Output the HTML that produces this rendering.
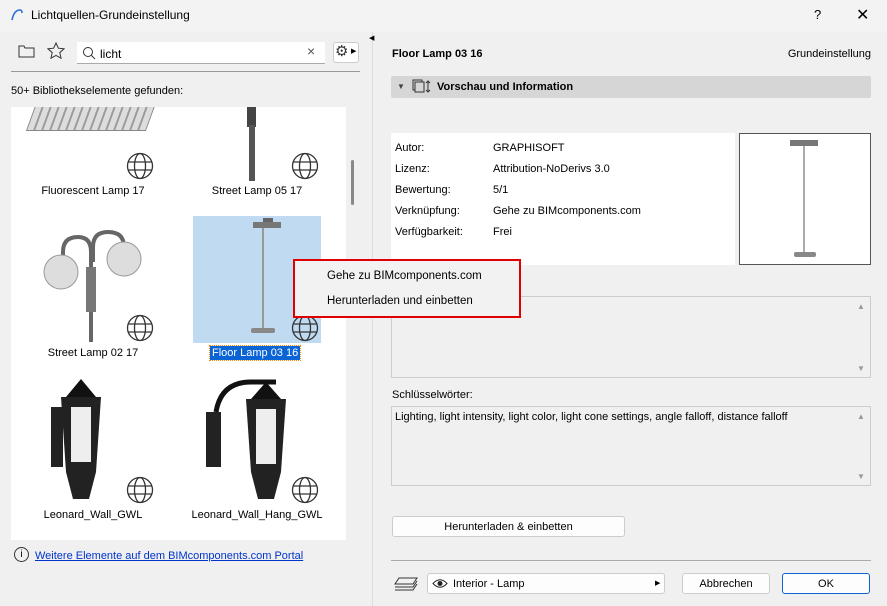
<!DOCTYPE html>
<html><head><meta charset="utf-8"><style>
*{box-sizing:border-box;margin:0;padding:0}
body{width:887px;height:606px;background:#f0f0f0;font-family:"Liberation Sans",sans-serif;font-size:11px;color:#000;position:relative;overflow:hidden}
.a{position:absolute}
.t{position:absolute;white-space:nowrap}
.globe{position:absolute;width:28px;height:28px}
.lbl{position:absolute;font-size:11px;text-align:center;width:160px}
</style></head><body>
<div class="a" style="left:0;top:0;width:887px;height:32px;background:#f3f3f3"></div>
<svg class="a" style="left:10px;top:8px" width="14" height="14"><path d="M2 12 Q4 2 10 2 Q12 2 12 5" stroke="#2b6cd8" stroke-width="1.6" fill="none"/></svg>
<div class="t" style="left:31px;top:8px;font-size:12px">Lichtquellen-Grundeinstellung</div>
<div class="t" style="left:814px;top:7px;font-size:13px">?</div>
<div class="t" style="left:856px;top:5px;font-size:16px">✕</div>
<svg class="a" style="left:18px;top:44px" width="17" height="14"><path d="M1 2h5l1 2h9v9H1z" stroke="#333" fill="none"/></svg>
<svg class="a" style="left:47px;top:42px" width="18" height="18"><path d="M9 1l2.4 5.2 5.6.6-4.2 3.8 1.2 5.6L9 13.4 4 16.2l1.2-5.6L1 6.8l5.6-.6z" stroke="#333" fill="none"/></svg>
<div class="a" style="left:77px;top:42px;width:248px;height:22px;background:#fff;border-bottom:1px solid #aaa"></div>
<svg class="a" style="left:82px;top:46px" width="14" height="14"><circle cx="6" cy="6" r="4.5" stroke="#333" fill="none"/><path d="M9 9l4 4" stroke="#333"/></svg>
<div class="t" style="left:100px;top:47px;font-size:12px">licht</div>
<div class="t" style="left:307px;top:43px;font-size:14px;color:#555">×</div>
<div class="a" style="left:333px;top:42px;width:26px;height:21px;background:#fff;border:1px solid #ccc;border-radius:3px"></div>
<div class="t" style="left:335px;top:42px;font-size:15px;color:#333">⚙</div>
<div class="t" style="left:351px;top:47px;font-size:7px">▶</div>
<div class="a" style="left:11px;top:71px;width:349px;height:1px;background:#999"></div>
<div class="t" style="left:11px;top:85px">50+ Bibliothekselemente gefunden:</div>
<div class="a" style="left:11px;top:107px;width:335px;height:433px;background:#fff;overflow:hidden">
 <div class="a" style="left:20px;top:-4px;width:120px;height:28px;background:repeating-linear-gradient(90deg,#ddd 0 6px,#999 6px 8px);transform:skewX(-20deg);border:1px solid #888"></div>
 <div class="a" style="left:236px;top:0;width:9px;height:20px;background:#444"></div>
 <div class="a" style="left:238px;top:18px;width:6px;height:56px;background:#555"></div>
 <div class="a" style="left:182px;top:109px;width:128px;height:127px;background:#bfdaf1"></div>
 <div class="a" style="left:252px;top:111px;width:10px;height:4px;background:#666"></div>
 <div class="a" style="left:242px;top:115px;width:28px;height:6px;background:#777"></div>
 <div class="a" style="left:251px;top:121px;width:2px;height:100px;background:#999"></div>
 <div class="a" style="left:240px;top:221px;width:24px;height:5px;background:#888;border-radius:2px"></div>
 <svg class="a" style="left:25px;top:120px" width="120" height="115"><path d="M27 45 V25 Q27 10 42 10 Q55 10 55 25 V115" stroke="#666" stroke-width="4" fill="none"/><path d="M57 35 V20 Q57 5 72 5 Q88 5 88 20" stroke="#666" stroke-width="4" fill="none"/><rect x="50" y="40" width="10" height="45" fill="#777"/><circle cx="25" cy="45" r="17" fill="#ddd" stroke="#999"/><circle cx="88" cy="32" r="17" fill="#ddd" stroke="#999"/></svg>
 <svg class="a" style="left:30px;top:270px" width="80" height="130"><path d="M40 2 L25 20 H55 Z" fill="#111"/><path d="M20 20 H60 L55 95 H25Z" fill="#222"/><rect x="30" y="30" width="20" height="55" fill="#eee"/><path d="M10 30 h12 v60 h-12z" fill="#222"/><path d="M25 95 H55 L48 122 H32Z" fill="#222"/></svg>
 <svg class="a" style="left:190px;top:270px" width="100" height="130"><path d="M15 35 Q20 5 50 5 H75" stroke="#111" stroke-width="5" fill="none"/><path d="M65 5 L50 22 H80Z" fill="#111"/><path d="M45 22 H85 L80 95 H50Z" fill="#222"/><rect x="55" y="32" width="20" height="55" fill="#eee"/><path d="M5 35 h15 v55 h-15z" fill="#222"/><path d="M50 95 H80 L73 122 H57Z" fill="#222"/></svg>
</div>
<svg class="globe" style="left:126px;top:152px" viewBox="0 0 28 28"><g stroke="#333" fill="none" stroke-width="1.3"><circle cx="14" cy="14" r="12.5"/><ellipse cx="14" cy="14" rx="5.5" ry="12.5"/><path d="M2 10h24M2 18h24"/></g></svg>
<svg class="globe" style="left:291px;top:152px" viewBox="0 0 28 28"><g stroke="#333" fill="none" stroke-width="1.3"><circle cx="14" cy="14" r="12.5"/><ellipse cx="14" cy="14" rx="5.5" ry="12.5"/><path d="M2 10h24M2 18h24"/></g></svg>
<svg class="globe" style="left:126px;top:314px" viewBox="0 0 28 28"><g stroke="#333" fill="none" stroke-width="1.3"><circle cx="14" cy="14" r="12.5"/><ellipse cx="14" cy="14" rx="5.5" ry="12.5"/><path d="M2 10h24M2 18h24"/></g></svg>
<svg class="globe" style="left:291px;top:314px" viewBox="0 0 28 28"><g stroke="#333" fill="none" stroke-width="1.3"><circle cx="14" cy="14" r="12.5"/><ellipse cx="14" cy="14" rx="5.5" ry="12.5"/><path d="M2 10h24M2 18h24"/></g></svg>
<svg class="globe" style="left:126px;top:476px" viewBox="0 0 28 28"><g stroke="#333" fill="none" stroke-width="1.3"><circle cx="14" cy="14" r="12.5"/><ellipse cx="14" cy="14" rx="5.5" ry="12.5"/><path d="M2 10h24M2 18h24"/></g></svg>
<svg class="globe" style="left:291px;top:476px" viewBox="0 0 28 28"><g stroke="#333" fill="none" stroke-width="1.3"><circle cx="14" cy="14" r="12.5"/><ellipse cx="14" cy="14" rx="5.5" ry="12.5"/><path d="M2 10h24M2 18h24"/></g></svg>
<div class="lbl" style="left:13px;top:185px">Fluorescent Lamp 17</div>
<div class="lbl" style="left:177px;top:185px">Street Lamp 05 17</div>
<div class="lbl" style="left:13px;top:347px">Street Lamp 02 17</div>
<div class="t" style="left:210px;top:346px;padding:1px 2px;background:#0a64d6;color:#fff;outline:1px dotted #f80">Floor Lamp 03 16</div>
<div class="lbl" style="left:13px;top:509px">Leonard_Wall_GWL</div>
<div class="lbl" style="left:177px;top:509px">Leonard_Wall_Hang_GWL</div>
<div class="a" style="left:351px;top:160px;width:3px;height:45px;background:#888;border-radius:2px"></div>
<div class="a" style="left:14px;top:547px;width:15px;height:15px;border:1px solid #333;border-radius:50%;font-size:10px;text-align:center;line-height:13px">i</div>
<div class="t" style="left:35px;top:550px;color:#0033cc;text-decoration:underline">Weitere Elemente auf dem BIMcomponents.com Portal</div>
<div class="a" style="left:372px;top:32px;width:1px;height:574px;background:#ddd"></div>
<div class="t" style="left:369px;top:34px;font-size:7px">◀</div>
<div class="t" style="left:392px;top:48px;font-weight:bold">Floor Lamp 03 16</div>
<div class="t" style="right:16px;top:48px">Grundeinstellung</div>
<div class="a" style="left:391px;top:76px;width:480px;height:22px;background:#d6d6d6;border-radius:2px"></div>
<div class="t" style="left:397px;top:82px;font-size:8px;color:#444">▼</div>
<svg class="a" style="left:411px;top:79px" width="20" height="16"><rect x="2" y="1" width="9" height="10" stroke="#333" fill="none"/><rect x="4" y="3" width="9" height="10" stroke="#333" fill="#d6d6d6"/><path d="M17 2v11M15 4l2-2 2 2M15 11l2 2 2-2" stroke="#333" fill="none"/></svg>
<div class="t" style="left:437px;top:81px;font-weight:bold">Vorschau und Information</div>
<div class="a" style="left:391px;top:133px;width:344px;height:132px;background:#fff"></div>
<div class="t" style="left:395px;top:138px;line-height:21px">Autor:<br>Lizenz:<br>Bewertung:<br>Verknüpfung:<br>Verfügbarkeit:</div>
<div class="t" style="left:493px;top:138px;line-height:21px">GRAPHISOFT<br>Attribution-NoDerivs 3.0<br>5/1<br>Gehe zu BIMcomponents.com<br>Frei</div>
<div class="a" style="left:739px;top:133px;width:132px;height:132px;background:#fff;border:1px solid #555"></div>
<div class="a" style="left:790px;top:140px;width:28px;height:6px;background:#777"></div>
<div class="a" style="left:803px;top:146px;width:2px;height:106px;background:#aaa"></div>
<div class="a" style="left:794px;top:252px;width:22px;height:5px;background:#888;border-radius:2px"></div>
<div class="a" style="left:391px;top:296px;width:480px;height:82px;background:#f0f0f0;border:1px solid #ccc"></div>
<div class="t" style="left:857px;top:302px;font-size:8px;color:#999">▲</div>
<div class="t" style="left:857px;top:364px;font-size:8px;color:#999">▼</div>
<div class="t" style="left:392px;top:389px">Schlüsselwörter:</div>
<div class="a" style="left:391px;top:406px;width:480px;height:80px;background:#f0f0f0;border:1px solid #ccc"></div>
<div class="t" style="left:395px;top:411px">Lighting, light intensity, light color, light cone settings, angle falloff, distance falloff</div>
<div class="t" style="left:857px;top:412px;font-size:8px;color:#999">▲</div>
<div class="t" style="left:857px;top:472px;font-size:8px;color:#999">▼</div>
<div class="a" style="left:392px;top:516px;width:233px;height:21px;background:#fdfdfd;border:1px solid #ccc;border-radius:3px;text-align:center;line-height:20px">Herunterladen &amp; einbetten</div>
<div class="a" style="left:391px;top:560px;width:480px;height:1px;background:#aaa"></div>
<svg class="a" style="left:393px;top:576px" width="26" height="18"><g stroke="#333" fill="none"><path d="M6 2h18l-4 6H2z"/><path d="M2 11h18l4-6M2 14h18l4-6"/></g></svg>
<div class="a" style="left:427px;top:573px;width:238px;height:21px;background:#fdfdfd;border:1px solid #ccc;border-radius:3px"></div>
<svg class="a" style="left:432px;top:578px" width="16" height="11"><path d="M1 5.5Q8 -2 15 5.5Q8 13 1 5.5z" stroke="#222" fill="none"/><circle cx="8" cy="5.5" r="2.5" fill="#222"/></svg>
<div class="t" style="left:453px;top:578px">Interior - Lamp</div>
<div class="t" style="left:655px;top:579px;font-size:7px">▶</div>
<div class="a" style="left:682px;top:573px;width:88px;height:21px;background:#fdfdfd;border:1px solid #ccc;border-radius:3px;text-align:center;line-height:20px">Abbrechen</div>
<div class="a" style="left:782px;top:573px;width:88px;height:21px;background:#fdfdfd;border:1px solid #0a64d6;border-radius:3px;text-align:center;line-height:20px">OK</div>
<div class="a" style="left:293px;top:259px;width:228px;height:59px;background:#f2f2f2;border:2px solid #e00000"></div>
<div class="t" style="left:327px;top:270px;font-size:11.5px">Gehe zu BIMcomponents.com</div>
<div class="t" style="left:327px;top:295px;font-size:11.5px">Herunterladen und einbetten</div>
</body></html>
